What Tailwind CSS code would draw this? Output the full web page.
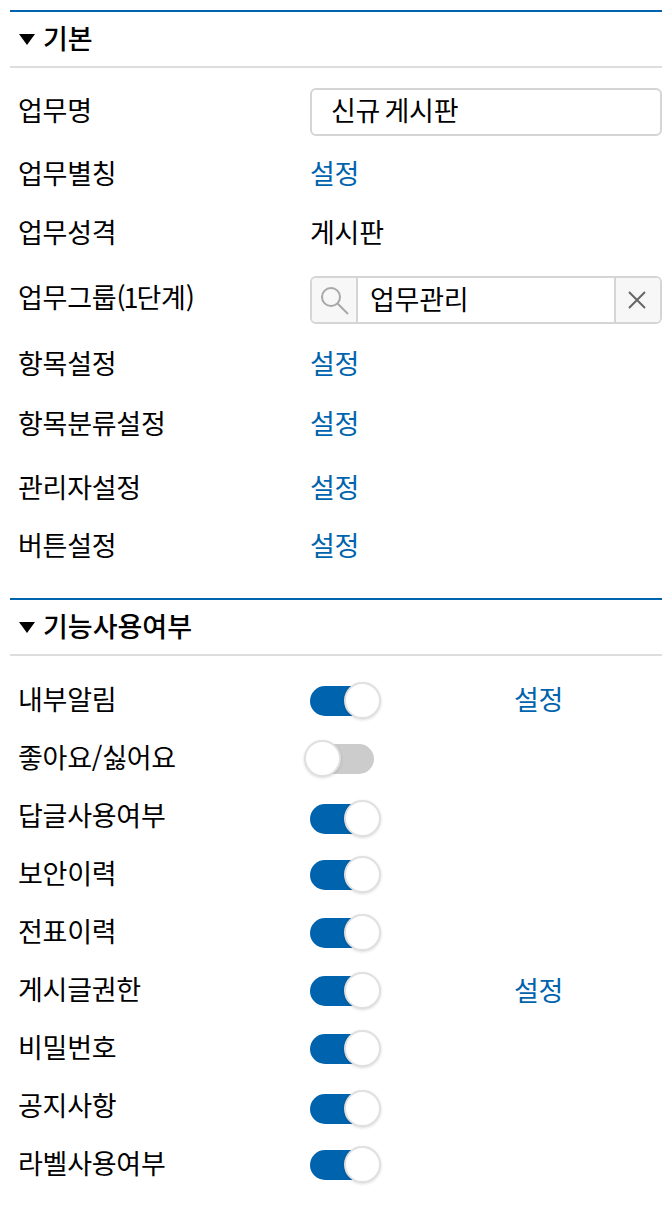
<!DOCTYPE html>
<html lang="ko">
<head>
    <meta charset="UTF-8">
    <title>업무설정</title>
    <script src="https://cdn.jsdelivr.net/npm/@tailwindcss/browser@4"></script>
</head>
<body class="bg-white text-black font-['Noto_Sans_CJK_KR',sans-serif] text-[27px] tracking-[-0.25px] leading-[36px]">
    <div class="px-[10px] pt-[10px] h-[1208px] overflow-hidden">
        <!-- 기본 -->
        <div class="h-[58px] border-t-2 border-b-2 border-t-[#0063ad] border-b-[#dddddd] flex items-center pl-[9px] gap-[8px]">
            <svg class="w-[16px] h-[11px]" viewBox="0 0 16 11"><path d="M0 0H16L8 11Z" fill="#000"></path></svg>
            <span class="font-medium tracking-normal -mt-[2px]">기본</span>
        </div>

        <div class="flex items-center h-[48px] mt-[20px]">
            <span class="w-[300px] pl-[8px] -mt-[4px]">업무명</span>
            <div class="w-[352px] h-[48px] border-2 border-[#d5d5d5] rounded-[6px] pl-[19px] flex items-center"><span class="-mt-[4px] [word-spacing:-3px]">신규 게시판</span></div>
        </div>
        <div class="flex items-center h-[48px] mt-[14px]">
            <span class="w-[300px] pl-[8px] -mt-[3px]">업무별칭</span>
            <a class="text-[#0063ad] -mt-[3px]">설정</a>
        </div>
        <div class="flex items-center h-[48px] mt-[12px]">
            <span class="w-[300px] pl-[8px] -mt-[4px]">업무성격</span>
            <span class="-mt-[4px]">게시판</span>
        </div>
        <div class="flex items-center h-[48px] mt-[18px]">
            <span class="w-[300px] pl-[8px] -mt-[7px]">업무그룹<span class="tracking-[-2px]">(1</span>단계)</span>
            <div class="w-[352px] h-[48px] border-2 border-[#d5d5d5] rounded-[6px] flex items-center overflow-hidden">
                <div class="w-[46px] h-full bg-[#f7f7f7] border-r-2 border-[#d5d5d5] flex items-center justify-center shrink-0">
                    <svg class="w-[30px] h-[30px]" viewBox="0 0 30 30" fill="none" stroke="#a8a8a8" stroke-width="2"><circle cx="12" cy="12" r="9"></circle><path d="M18.5 18.5L29 29"></path></svg>
                </div>
                <div class="flex-1 pl-[12px]"><span class="block -mt-[2px]">업무관리</span></div>
                <div class="w-[46px] h-full bg-[#f7f7f7] border-l-2 border-[#d5d5d5] flex items-center justify-center shrink-0 pr-[2px]">
                    <svg class="w-[20px] h-[20px]" viewBox="0 0 20 20" fill="none" stroke="#666666" stroke-width="2"><path d="M2 2L18 18M18 2L2 18"></path></svg>
                </div>
            </div>
        </div>
        <div class="flex items-center h-[48px] mt-[15px]">
            <span class="w-[300px] pl-[8px] -mt-[1px]">항목설정</span>
            <a class="text-[#0063ad] -mt-[1px]">설정</a>
        </div>
        <div class="flex items-center h-[48px] mt-[12px]">
            <span class="w-[300px] pl-[8px] -mt-[1px]">항목분류설정</span>
            <a class="text-[#0063ad] -mt-[1px]">설정</a>
        </div>
        <div class="flex items-center h-[48px] mt-[16px]">
            <span class="w-[300px] pl-[8px] -mt-[1px]">관리자설정</span>
            <a class="text-[#0063ad] -mt-[1px]">설정</a>
        </div>
        <div class="flex items-center h-[48px] mt-[10px]">
            <span class="w-[300px] pl-[8px] -mt-[1px]">버튼설정</span>
            <a class="text-[#0063ad] -mt-[1px]">설정</a>
        </div>

        <!-- 기능사용여부 -->
        <div class="h-[58px] mt-[29px] border-t-2 border-b-2 border-t-[#0063ad] border-b-[#dddddd] flex items-center pl-[9px] gap-[8px]">
            <svg class="w-[16px] h-[11px]" viewBox="0 0 16 11"><path d="M0 0H16L8 11Z" fill="#000"></path></svg>
            <span class="font-medium tracking-normal -mt-[2px]">기능사용여부</span>
        </div>

        <div class="mt-[16px] flex flex-col">
            <div class="flex items-center h-[58px]">
                <span class="w-[300px] pl-[8px] -mt-[5px]">내부알림</span>
                <div class="relative w-[64px] h-[30px] rounded-full bg-[#0063ad]"><span class="absolute right-[-7px] top-[-4px] w-[37px] h-[37px] rounded-full bg-white border-2 border-[#e0e0e0] shadow-[0_1px_3px_rgba(0,0,0,0.15)]"></span></div>
                <a class="ml-[140px] text-[#0063ad] -mt-[5px]">설정</a>
            </div>
            <div class="flex items-center h-[58px]">
                <span class="w-[300px] pl-[8px] -mt-[5px]">좋아요/싫어요</span>
                <div class="relative w-[64px] h-[30px] rounded-full bg-[#cccccc]"><span class="absolute left-[-6px] top-[-4px] w-[37px] h-[37px] rounded-full bg-white border-2 border-[#e0e0e0] shadow-[0_1px_3px_rgba(0,0,0,0.15)]"></span></div>
            </div>
            <div class="flex items-center h-[58px]">
                <span class="w-[300px] pl-[8px] -mt-[5px]">답글사용여부</span>
                <div class="relative w-[64px] h-[30px] mt-[4px] rounded-full bg-[#0063ad]"><span class="absolute right-[-7px] top-[-4px] w-[37px] h-[37px] rounded-full bg-white border-2 border-[#e0e0e0] shadow-[0_1px_3px_rgba(0,0,0,0.15)]"></span></div>
            </div>
            <div class="flex items-center h-[58px]">
                <span class="w-[300px] pl-[8px] -mt-[5px]">보안이력</span>
                <div class="relative w-[64px] h-[30px] rounded-full bg-[#0063ad]"><span class="absolute right-[-7px] top-[-4px] w-[37px] h-[37px] rounded-full bg-white border-2 border-[#e0e0e0] shadow-[0_1px_3px_rgba(0,0,0,0.15)]"></span></div>
            </div>
            <div class="flex items-center h-[58px]">
                <span class="w-[300px] pl-[8px] -mt-[5px]">전표이력</span>
                <div class="relative w-[64px] h-[30px] rounded-full bg-[#0063ad]"><span class="absolute right-[-7px] top-[-4px] w-[37px] h-[37px] rounded-full bg-white border-2 border-[#e0e0e0] shadow-[0_1px_3px_rgba(0,0,0,0.15)]"></span></div>
            </div>
            <div class="flex items-center h-[58px]">
                <span class="w-[300px] pl-[8px] -mt-[5px]">게시글권한</span>
                <div class="relative w-[64px] h-[30px] rounded-full bg-[#0063ad]"><span class="absolute right-[-7px] top-[-4px] w-[37px] h-[37px] rounded-full bg-white border-2 border-[#e0e0e0] shadow-[0_1px_3px_rgba(0,0,0,0.15)]"></span></div>
                <a class="ml-[140px] text-[#0063ad] -mt-[3px]">설정</a>
            </div>
            <div class="flex items-center h-[58px]">
                <span class="w-[300px] pl-[8px] -mt-[5px]">비밀번호</span>
                <div class="relative w-[64px] h-[30px] rounded-full bg-[#0063ad]"><span class="absolute right-[-7px] top-[-4px] w-[37px] h-[37px] rounded-full bg-white border-2 border-[#e0e0e0] shadow-[0_1px_3px_rgba(0,0,0,0.15)]"></span></div>
            </div>
            <div class="flex items-center h-[58px]">
                <span class="w-[300px] pl-[8px] -mt-[5px]">공지사항</span>
                <div class="relative w-[64px] h-[30px] mt-[4px] rounded-full bg-[#0063ad]"><span class="absolute right-[-7px] top-[-4px] w-[37px] h-[37px] rounded-full bg-white border-2 border-[#e0e0e0] shadow-[0_1px_3px_rgba(0,0,0,0.15)]"></span></div>
            </div>
            <div class="flex items-center h-[58px]">
                <span class="w-[300px] pl-[8px] -mt-[5px]">라벨사용여부</span>
                <div class="relative w-[64px] h-[30px] rounded-full bg-[#0063ad]"><span class="absolute right-[-7px] top-[-4px] w-[37px] h-[37px] rounded-full bg-white border-2 border-[#e0e0e0] shadow-[0_1px_3px_rgba(0,0,0,0.15)]"></span></div>
            </div>
        </div>
    </div>
</body>
</html>
